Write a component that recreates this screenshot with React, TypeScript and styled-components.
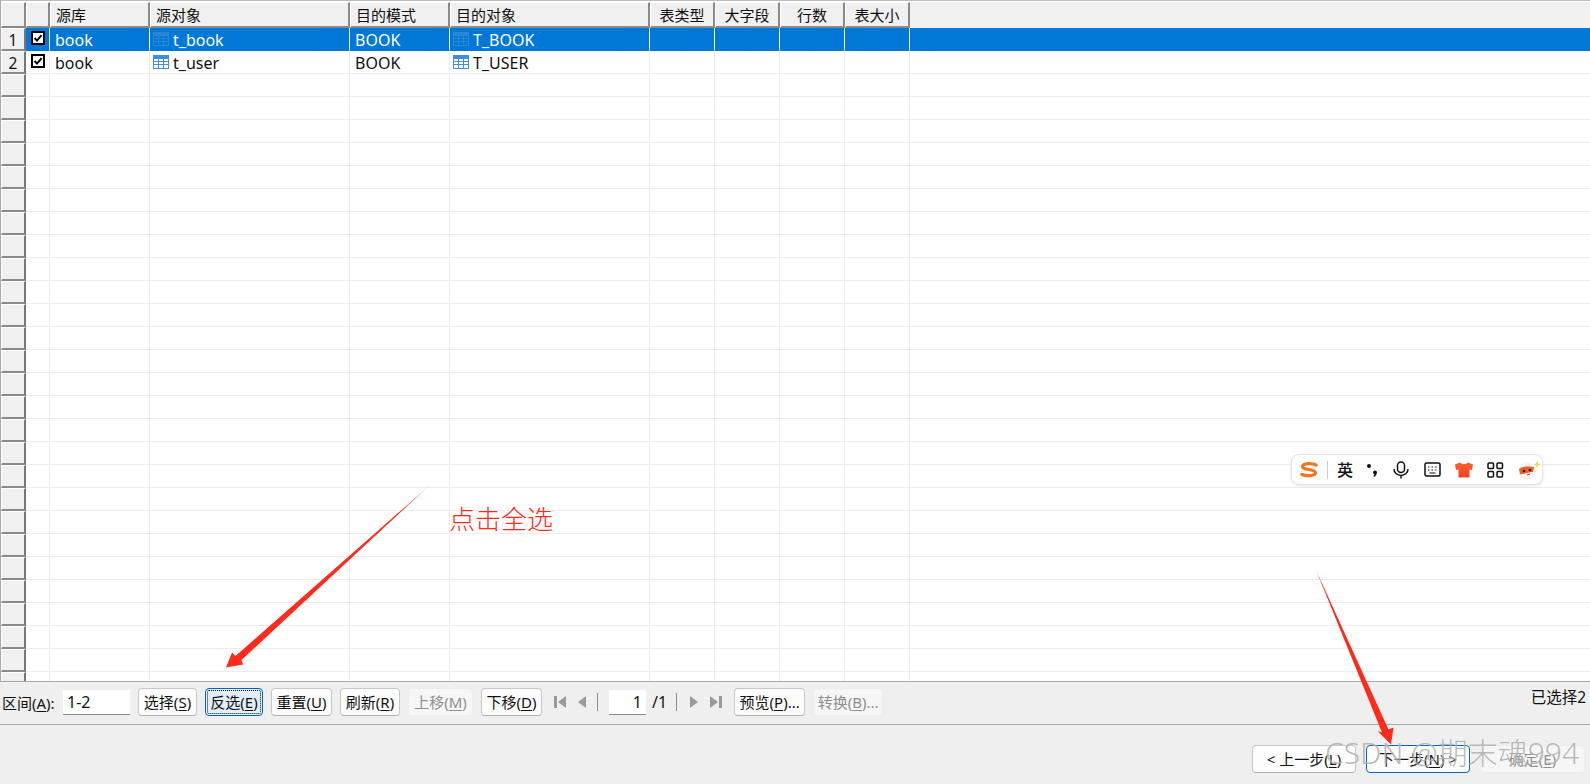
import React from 'react';
import styled, { createGlobalStyle } from 'styled-components';

const FONT = '"Noto Sans", "Noto Sans CJK SC", sans-serif';

const GlobalStyle = createGlobalStyle`
  html, body {
    margin: 0;
    padding: 0;
    background: #efefef;
    overflow: hidden;
  }
  body {
    font-family: ${FONT};
    font-size: 15px;
    color: #111;
  }
  u {
    text-underline-offset: 2px;
  }
`;

const SPage = styled.div`
  position: relative;
  width: 1590px;
  height: 784px;
  display: flex;
  flex-direction: column;
  overflow: hidden;
`;

const SGrid = styled.div`
  flex: 1;
  min-height: 0;
  overflow: hidden;
  background: #fff;
  border-top: 1px solid #bdbdbd;
  border-left: 1px solid #a8a8a8;
  border-bottom: 1px solid #a8a8a8;
  padding-top: 1px;
`;

const SHeadRow = styled.div`
  display: flex;
  height: 26px;
  background: #f0f0f0;
`;

const SHeadCell = styled.div<{ $w: number; $center?: boolean }>`
  flex: 0 0 ${p => p.$w}px;
  box-sizing: border-box;
  height: 26px;
  line-height: 24px;
  padding: ${p => (p.$center ? '0' : '0 0 0 5px')};
  text-align: ${p => (p.$center ? 'center' : 'left')};
  background: #f0f0f0;
  border-top: 1px solid #fff;
  border-left: 1px solid #fff;
  border-right: 2px solid #8a8a8a;
  border-bottom: 2px solid #8a8a8a;
  font-size: 15px;
  white-space: nowrap;
  overflow: hidden;
`;

const SRow = styled.div<{ $selected?: boolean }>`
  display: flex;
  height: 23px;
  background: ${p => (p.$selected ? '#0078d7' : '#fff')};
  color: ${p => (p.$selected ? '#fff' : '#111')};
`;

const SRowHead = styled.div`
  flex: 0 0 25px;
  box-sizing: border-box;
  height: 23px;
  line-height: 22px;
  text-align: center;
  font-size: 15.5px;
  color: #111;
  background: #f0f0f0;
  border-top: 1px solid #fff;
  border-left: 1px solid #fff;
  border-right: 2px solid #777;
  border-bottom: 2px solid #8a8a8a;
`;

const SCell = styled.div<{ $w?: number; $selected?: boolean; $last?: boolean }>`
  flex: ${p => (p.$w ? `0 0 ${p.$w}px` : '1')};
  box-sizing: border-box;
  display: flex;
  align-items: center;
  gap: 4px;
  padding: 1px 0 0 5px;
  font-size: 16px;
  white-space: nowrap;
  border-right: ${p => (p.$last ? 'none' : `1px solid ${p.$selected ? '#fff' : '#ececec'}`)};
  border-bottom: 1px solid ${p => (p.$selected ? '#0078d7' : '#ececec')};
`;

const STableIcon = styled.svg`
  flex: none;
  margin: -2px 0 0 -2px;
`;

const SCheckIcon = styled.svg`
  flex: none;
  margin-top: -3px;
`;

const SToolbar = styled.div`
  flex: 0 0 43px;
  box-sizing: border-box;
  display: flex;
  align-items: center;
  gap: 8px;
  padding: 0 4px 2px 2px;
  border-bottom: 1px solid #a8a8a8;
  background: #efefef;
`;

const SLabel = styled.label`
  flex: 0 0 53px;
  font-size: 15px;
  white-space: nowrap;
`;

const SInput = styled.div<{ $w: number; $right?: boolean }>`
  flex: 0 0 ${p => p.$w}px;
  box-sizing: border-box;
  height: 25px;
  line-height: 24px;
  padding: 0 4px;
  background: #fff;
  border-bottom: 1px solid #8a8a8a;
  text-align: ${p => (p.$right ? 'right' : 'left')};
  font-size: 16px;
`;

const SButton = styled.button<{ $w: number; $focus?: boolean; $primary?: boolean }>`
  flex: 0 0 ${p => p.$w}px;
  position: relative;
  box-sizing: border-box;
  height: 28px;
  padding: 0;
  font-family: ${FONT};
  font-size: 15px;
  line-height: 24px;
  color: #111;
  white-space: nowrap;
  border-radius: 4px;
  background: ${p => (p.$focus ? '#e1eefa' : '#fdfdfd')};
  border: 1px solid ${p => (p.$focus || p.$primary ? '#0067c0' : '#c8c8c8')};
  border-bottom-color: ${p => (p.$focus || p.$primary ? '#0067c0' : '#b0b0b0')};
  outline: ${p => (p.$focus ? '1px dotted #111' : 'none')};
  outline-offset: -3px;
  &:disabled {
    color: #8e8e8e;
    background: #f6f6f6;
    border-color: #ececec;
  }
`;

const SNav = styled.div`
  display: flex;
  flex: 0 0 175px;
  align-items: center;
`;

const SNavBtn = styled.div<{ $mr?: number }>`
  flex: 0 0 20px;
  margin-right: ${p => p.$mr ?? 2}px;
  display: flex;
  justify-content: center;
  align-items: center;
`;

const SNavSep = styled.div<{ $ml: number; $mr: number }>`
  flex: 0 0 1px;
  height: 18px;
  margin: 0 ${p => p.$mr}px 0 ${p => p.$ml}px;
  background: #8e8e8e;
`;

const SPageOf = styled.span`
  margin-left: 6px;
  font-size: 16px;
`;

const SStatus = styled.span`
  margin-left: auto;
  font-size: 15.5px;
  white-space: nowrap;
  transform: translateY(-6px);
`;

const SFooter = styled.div`
  flex: 0 0 59px;
  box-sizing: border-box;
  display: flex;
  justify-content: flex-end;
  align-items: flex-end;
  gap: 10px;
  padding: 0 5px 11px 0;
  background: #efefef;
`;

const SOverlay = styled.svg`
  position: absolute;
  inset: 0;
  pointer-events: none;
`;

const SNote = styled.div`
  position: absolute;
  left: 449px;
  top: 500px;
  font-size: 26px;
  font-weight: 300;
  line-height: 38px;
  color: #ff2a1a;
  white-space: nowrap;
`;

const SWatermark = styled.div`
  position: absolute;
  left: 1325px;
  top: 733px;
  font-size: 30px;
  font-weight: 300;
  line-height: 40px;
  color: rgba(125, 125, 125, 0.55);
  text-shadow: 0 0 1px rgba(255, 255, 255, 0.8);
  white-space: nowrap;
  pointer-events: none;
`;

const SImeBar = styled.div`
  position: absolute;
  left: 1291px;
  top: 454px;
  width: 252px;
  height: 31px;
  box-sizing: border-box;
  display: flex;
  align-items: center;
  padding-left: 8px;
  background: #fff;
  border: 1px solid #e4e4e4;
  border-radius: 8px;
  box-shadow: 0 1px 3px rgba(0, 0, 0, 0.1);
`;

const SImeSep = styled.div`
  flex: 0 0 1px;
  height: 18px;
  margin: 0 9px;
  background: #cfcfcf;
`;

const SImeText = styled.span`
  flex: 0 0 16px;
  font-size: 16px;
  font-weight: 500;
  line-height: 20px;
  margin-right: 13px;
`;

const SImeIcon = styled.svg<{ $mr: number }>`
  flex: none;
  margin-right: ${p => p.$mr}px;
`;

const HEADERS: { title: string; w: number; center?: boolean }[] = [
  { title: '', w: 25 },
  { title: '', w: 24 },
  { title: '源库', w: 100 },
  { title: '源对象', w: 200 },
  { title: '目的模式', w: 100 },
  { title: '目的对象', w: 200 },
  { title: '表类型', w: 65, center: true },
  { title: '大字段', w: 65, center: true },
  { title: '行数', w: 65, center: true },
  { title: '表大小', w: 65, center: true },
];

const DATA = [
  { source: 'book', object: 't_book', schema: 'BOOK', target: 'T_BOOK' },
  { source: 'book', object: 't_user', schema: 'BOOK', target: 'T_USER' },
];

const ROW_COUNT = 29;

const TableIcon = ({ selected }: { selected?: boolean }) => {
  const fill = selected ? '#2b87d6' : '#3d8fdc';
  const line = selected ? '#0078d7' : '#fff';
  return (
    <STableIcon width="16" height="14" viewBox="0 0 16 14">
      <rect width="16" height="14" fill={fill} />
      <g fill={line}>
        <rect x="1" y="4" width="4" height="2" />
        <rect x="6" y="4" width="4" height="2" />
        <rect x="11" y="4" width="4" height="2" />
        <rect x="1" y="7" width="4" height="2" />
        <rect x="6" y="7" width="4" height="2" />
        <rect x="11" y="7" width="4" height="2" />
        <rect x="1" y="10" width="4" height="3" />
        <rect x="6" y="10" width="4" height="3" />
        <rect x="11" y="10" width="4" height="3" />
      </g>
    </STableIcon>
  );
};

const CheckIcon = () => (
  <SCheckIcon width="14" height="14" viewBox="0 0 14 14">
    <rect x="1" y="1" width="12" height="12" fill="#fff" stroke="#000" strokeWidth="2" />
    <path d="M3.600 7 L6 9.600 L10.600 4.200" fill="none" stroke="#000" strokeWidth="2" />
  </SCheckIcon>
);

const NavIcon = ({ kind }: { kind: 'first' | 'prev' | 'next' | 'last' }) => {
  if (kind === 'first')
    return (
      <svg width="12" height="12" viewBox="0 0 12 12">
        <path d="M0 0h3v12H0z M12 0v12L4 6z" fill="#9a9a9a" />
      </svg>
    );
  if (kind === 'prev')
    return (
      <svg width="8" height="12" viewBox="0 0 8 12">
        <path d="M8 0v12L0 6z" fill="#9a9a9a" />
      </svg>
    );
  if (kind === 'next')
    return (
      <svg width="8" height="12" viewBox="0 0 8 12">
        <path d="M0 0v12l8-6z" fill="#9a9a9a" />
      </svg>
    );
  return (
    <svg width="12" height="12" viewBox="0 0 12 12">
      <path d="M0 0v12l8-6z M9 0h3v12H9z" fill="#9a9a9a" />
    </svg>
  );
};

const Arrows = () => (
  <SOverlay width="1590" height="784" viewBox="0 0 1590 784">
    <defs>
      <linearGradient id="fade" x1="431" y1="484" x2="398" y2="514" gradientUnits="userSpaceOnUse">
        <stop offset="0" stopColor="#ff2a1a" stopOpacity="0.3" />
        <stop offset="1" stopColor="#ff2a1a" />
      </linearGradient>
    </defs>
    <path d="M431 484 L241.500 660 L243 664.500 L226 667.500 L232 652.500 L235.500 656 Z" fill="url(#fade)" />
    <path d="M1316 570 L1388.500 729.500 L1393.500 727.500 L1391 744.500 L1377.500 731 L1382 732.500 Z" fill="#ff2a1a" />
  </SOverlay>
);

const ImeBar = () => (
  <SImeBar>
    <SImeIcon $mr={0} width="18" height="16" viewBox="0 0 18 16">
      <path
        d="M16 3 C12 1 3 1 2.500 4.500 C2 8 15.500 7 15.500 10.500 C15.500 14 6 14.500 2 12.500"
        fill="none"
        stroke="#f9731c"
        strokeWidth="3.200"
        strokeLinecap="round"
      />
    </SImeIcon>
    <SImeSep />
    <SImeText>英</SImeText>
    <SImeIcon $mr={15} width="12" height="14" viewBox="0 0 12 14">
      <circle cx="3" cy="3" r="2" fill="#111" />
      <circle cx="9" cy="9.500" r="2" fill="#111" />
      <path d="M10 10.500 L8 13.500" stroke="#111" strokeWidth="1.500" />
    </SImeIcon>
    <SImeIcon $mr={15} width="16" height="18" viewBox="0 0 16 18">
      <rect x="4.500" y="1" width="7" height="10.500" rx="3.500" fill="none" stroke="#111" strokeWidth="1.500" />
      <path d="M1 8 C1 16.500 15 16.500 15 8 M8 14 V17.500" fill="none" stroke="#111" strokeWidth="1.500" />
    </SImeIcon>
    <SImeIcon $mr={14} width="17" height="15" viewBox="0 0 17 15">
      <rect x="1" y="1" width="15" height="13" rx="1.500" fill="none" stroke="#111" strokeWidth="1.500" />
      <path d="M4 5h1.500M7.500 5H9M11 5h1.500M4 8h1.500M7.500 8H9M11 8h1.500M5.500 11h6" stroke="#111" strokeWidth="1.200" />
    </SImeIcon>
    <SImeIcon $mr={14} width="18" height="16" viewBox="0 0 18 16">
      <defs>
        <linearGradient id="shirt" x1="0" y1="0" x2="0" y2="1">
          <stop offset="0" stopColor="#f9622a" />
          <stop offset="1" stopColor="#fb3f25" />
        </linearGradient>
      </defs>
      <path d="M5 0.500 C7 2.500 11 2.500 13 0.500 L18 2.500 L17 8 L14.500 7.500 V15.500 H3.500 V7.500 L1 8 L0 2.500 Z" fill="url(#shirt)" />
    </SImeIcon>
    <SImeIcon $mr={13} width="17" height="16" viewBox="0 0 17 16">
      <g fill="none" stroke="#111" strokeWidth="1.500">
        <rect x="1" y="1" width="5.500" height="5.500" rx="1" />
        <rect x="10" y="1" width="5.500" height="5.500" rx="1" />
        <rect x="1" y="9.500" width="5.500" height="5.500" rx="1" />
        <rect x="10" y="9.500" width="5.500" height="5.500" rx="1" />
      </g>
    </SImeIcon>
    <SImeIcon $mr={0} width="24" height="20" viewBox="0 0 24 20">
      <circle cx="10" cy="11" r="9" fill="#f7f2ee" />
      <path d="M2 9 C6 6 13 6 17 7 L16 12 C11 12 6 15 3 14 Z" fill="#e9602a" />
      <circle cx="7" cy="11" r="1.300" fill="#222" />
      <circle cx="13" cy="10" r="1.300" fill="#222" />
      <path d="M10 15 l3-1" stroke="#555" strokeWidth="1" />
      <path d="M20 1 l1 2.500 2.500 1 -2.500 1 -1 2.500 -1-2.500 -2.500-1 2.500-1z" fill="#f7d64a" />
    </SImeIcon>
  </SImeBar>
);

export default function App() {
  const rows = Array.from({ length: ROW_COUNT }, (_, i) => i);
  return (
    <SPage>
      <GlobalStyle />
      <SGrid>
        <SHeadRow>
          {HEADERS.map((h, i) => (
            <SHeadCell key={i} $w={h.w} $center={h.center}>
              {h.title}
            </SHeadCell>
          ))}
        </SHeadRow>
        {rows.map(i => {
          const item = DATA[i];
          const selected = i === 0;
          return (
            <SRow key={i} $selected={selected}>
              <SRowHead>{item ? i + 1 : ''}</SRowHead>
              <SCell $w={24} $selected={selected}>
                {item && <CheckIcon />}
              </SCell>
              <SCell $w={100} $selected={selected}>
                {item?.source}
              </SCell>
              <SCell $w={200} $selected={selected}>
                {item && <TableIcon selected={selected} />}
                {item?.object}
              </SCell>
              <SCell $w={100} $selected={selected}>
                {item?.schema}
              </SCell>
              <SCell $w={200} $selected={selected}>
                {item && <TableIcon selected={selected} />}
                {item?.target}
              </SCell>
              <SCell $w={65} $selected={selected} />
              <SCell $w={65} $selected={selected} />
              <SCell $w={65} $selected={selected} />
              <SCell $w={65} $selected={selected} />
              <SCell $selected={selected} $last />
            </SRow>
          );
        })}
      </SGrid>
      <SToolbar>
        <SLabel>
          区间(<u>A</u>):
        </SLabel>
        <SInput $w={67}>1-2</SInput>
        <SButton $w={59}>
          选择(<u>S</u>)
        </SButton>
        <SButton $w={58} $focus>
          反选(<u>E</u>)
        </SButton>
        <SButton $w={61}>
          重置(<u>U</u>)
        </SButton>
        <SButton $w={60}>
          刷新(<u>R</u>)
        </SButton>
        <SButton $w={65} disabled>
          上移(<u>M</u>)
        </SButton>
        <SButton $w={61}>
          下移(<u>D</u>)
        </SButton>
        <SNav>
          <SNavBtn>
            <NavIcon kind="first" />
          </SNavBtn>
          <SNavBtn $mr={0}>
            <NavIcon kind="prev" />
          </SNavBtn>
          <SNavSep $ml={5} $mr={11} />
          <SInput $w={37} $right>
            1
          </SInput>
          <SPageOf>/1</SPageOf>
          <SNavSep $ml={9} $mr={7} />
          <SNavBtn>
            <NavIcon kind="next" />
          </SNavBtn>
          <SNavBtn $mr={0}>
            <NavIcon kind="last" />
          </SNavBtn>
        </SNav>
        <SButton $w={71}>
          预览(<u>P</u>)...
        </SButton>
        <SButton $w={70} disabled>
          转换(<u>B</u>)...
        </SButton>
        <SStatus>已选择2</SStatus>
      </SToolbar>
      <SFooter>
        <SButton $w={104}>
          &lt; 上一步(<u>L</u>)
        </SButton>
        <SButton $w={104} $primary>
          下一步(<u>N</u>) &gt;
        </SButton>
        <SButton $w={105} disabled>
          确定(<u>E</u>)
        </SButton>
      </SFooter>
      <SNote>点击全选</SNote>
      <Arrows />
      <ImeBar />
      <SWatermark>CSDN @期末魂994</SWatermark>
    </SPage>
  );
}
